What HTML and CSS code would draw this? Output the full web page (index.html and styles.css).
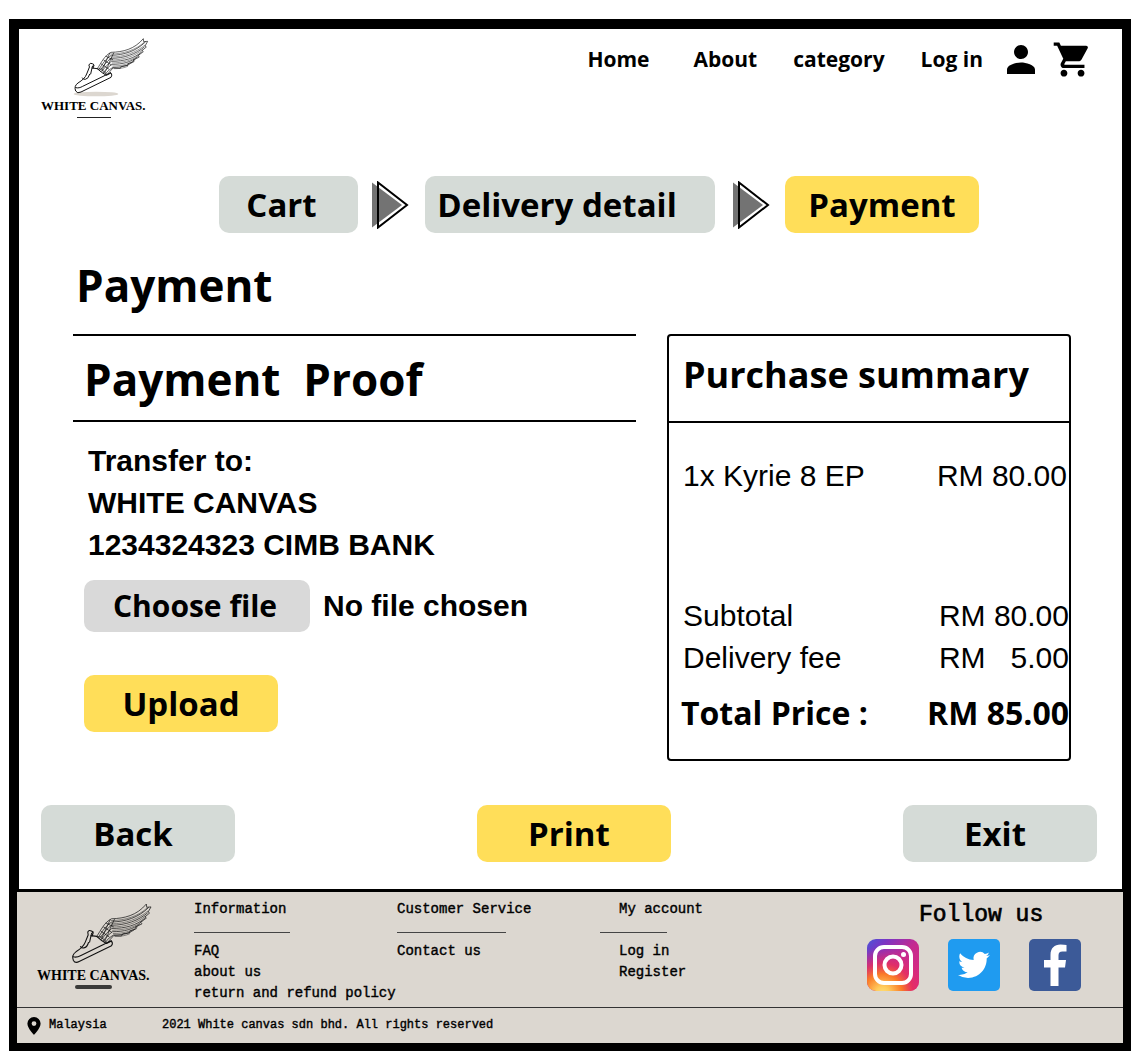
FILE: index.html
```html
<!DOCTYPE html>
<html lang="en">
<head>
<meta charset="utf-8">
<meta name="viewport" content="width=device-width, initial-scale=1">
<title>White Canvas - Payment</title>
<link rel="stylesheet" href="styles.css">
</head>
<body>
<svg class="defs" aria-hidden="true">
  <symbol id="winged-shoe" viewBox="0 0 270 192">
    <g fill="none" stroke="#111" stroke-linecap="round" stroke-linejoin="round">
      <g stroke-width="3">
        <path d="M69 92q3-7 10-3l5 3q-6 3-6 10l16 2q12 12 27 20l14-7q5 6 0 13L45 174q-11 6-16-3-6-15 7-24c14-9 22-16 26-27l8-20z"/>
        <path d="M29 161c7 2 14 0 21-4l84-41M78 102l-4 18M71 121q-4 14-13 15-7 1-9-4M84 94l-3 9"/>
      </g>
      <g stroke-width="2">
        <path d="M94 104c12-18 21-39 41-49 36-1 70-9 97-41l1 9 12-1-8 14 4 3-13 11 4 3-16 12 4 4-18 9 2 5-18 6v5l-20 3-3 6-22-1-18 20-16-16z"/>
        <path d="M99 106c10-16 22-34 37-42 38-1 74-12 102-40M103 108c9-12 20-27 32-35 40 0 75-13 100-34M108 112c8-12 18-22 28-30 38 0 69-9 91-28M112 116c8-10 16-18 26-25 32 0 58-7 76-22M118 120c6-8 13-14 23-20 26 0 43-4 58-15M131 58l-24 53M143 57l-10 21-8 20-9 19M120 67l20 10M113 78l22 14M106 90l22 15"/>
      </g>
      <path stroke-width="1.3" d="M134 60c38 0 76-12 100-35M135 69c40 0 75-14 101-35M136 78c38 0 70-12 93-30M138 87c34-1 63-8 82-25M140 96c28 0 50-6 67-18M145 104c18 0 29-2 40-7"/>
    </g>
  </symbol>
  <symbol id="step-arrow" viewBox="0 0 37 48">
    <path d="M0 1.500v45L6 42l24-18L6 6z" fill="#737373"/>
    <path d="M6 1.500v45L35 24z" fill="none" stroke="#000" stroke-width="2"/>
  </symbol>
</svg>
<div class="page">
  <header class="header">
    <a class="logo" href="#">
      <svg class="logo-art" viewBox="0 0 270 192" aria-hidden="true"><ellipse cx="90" cy="180" rx="67" ry="7" fill="#dcd7d0"/><use href="#winged-shoe" width="270" height="192"/></svg>
      <span>WHITE CANVAS.</span>
      <i class="logo-line"></i>
    </a>
    <nav class="nav" aria-label="Main">
      <a class="nav-home" href="#">Home</a>
      <a href="#">About</a>
      <a href="#">category</a>
      <a href="#">Log in</a>
      <div class="nav-icons">
        <a href="#" aria-label="Profile"><svg width="42" height="42" viewBox="0 0 24 24"><path d="M12 12c2.200 0 4-1.800 4-4s-1.800-4-4-4-4 1.800-4 4 1.800 4 4 4zm0 2c-2.700 0-8 1.300-8 4v2.500h16V18c0-2.700-5.300-4-8-4z"/></svg></a>
        <a href="#" aria-label="Shopping cart"><svg width="41" height="41" viewBox="0 0 24 24"><path d="M7 18c-1.100 0-1.990.9-1.990 2S5.900 22 7 22s2-.9 2-2-.9-2-2-2zM1 2v2h2l3.600 7.590-1.350 2.450c-.16.280-.25.610-.25.960 0 1.100.9 2 2 2h12v-2H7.420c-.14 0-.25-.11-.25-.25l.03-.12.900-1.630h7.450c.75 0 1.410-.41 1.750-1.030l3.580-6.490c.08-.14.12-.31.12-.48 0-.55-.45-1-1-1H5.210l-.94-2H1zm16 16c-1.100 0-1.990.9-1.990 2s.89 2 1.990 2 2-.9 2-2-.9-2-2-2z"/></svg></a>
      </div>
    </nav>
  </header>

  <main class="main">
    <nav class="steps" aria-label="Checkout steps">
      <button class="btn step-cart" type="button">Cart</button>
      <svg class="arrow" aria-hidden="true"><use href="#step-arrow"/></svg>
      <button class="btn step-delivery" type="button">Delivery detail</button>
      <svg class="arrow" aria-hidden="true"><use href="#step-arrow"/></svg>
      <button class="btn primary" type="button" aria-current="step">Payment</button>
    </nav>

    <h1 class="title">Payment</h1>

    <div class="columns">
      <section class="proof">
        <h2 class="proof-title">Payment  Proof</h2>
        <form class="proof-body">
          <p class="transfer">Transfer to:<br>WHITE CANVAS<br>1234324323 CIMB BANK</p>
          <div class="file-row">
            <input class="file-input" type="file" id="proof">
            <label class="file-button" for="proof">Choose file</label>
            <span>No file chosen</span>
          </div>
          <button class="btn primary" type="button">Upload</button>
        </form>
      </section>

      <section class="summary">
        <h2 class="summary-title">Purchase summary</h2>
        <table class="summary-table">
          <tbody>
            <tr class="item"><th scope="row">1x Kyrie 8 EP</th><td>RM 80.00</td></tr>
            <tr><th scope="row">Subtotal</th><td>RM 80.00</td></tr>
            <tr><th scope="row">Delivery fee</th><td>RM   5.00</td></tr>
          </tbody>
          <tfoot>
            <tr class="total"><th scope="row">Total Price :</th><td>RM 85.00</td></tr>
          </tfoot>
        </table>
      </section>
    </div>

    <div class="actions">
      <button class="btn" type="button">Back</button>
      <button class="btn primary print" type="button">Print</button>
      <button class="btn exit" type="button">Exit</button>
    </div>
  </main>

  <footer class="footer">
    <div class="footer-top">
      <a class="logo logo-footer" href="#">
        <svg class="logo-art" viewBox="0 0 270 192" aria-hidden="true"><use href="#winged-shoe" width="270" height="192"/></svg>
        <span>WHITE CANVAS.</span>
        <i class="logo-line"></i>
      </a>
      <section class="links">
        <h3>Information</h3>
        <hr class="rule rule-info">
        <a href="#">FAQ</a>
        <a href="#">about us</a>
        <a href="#">return and refund policy</a>
      </section>
      <section class="links">
        <h3>Customer Service</h3>
        <hr class="rule rule-service">
        <a href="#">Contact us</a>
      </section>
      <section class="links links-account">
        <h3>My account</h3>
        <hr class="rule rule-account">
        <a href="#">Log in</a>
        <a href="#">Register</a>
      </section>
      <section class="follow">
        <h3>Follow us</h3>
        <div class="social">
          <a href="#" aria-label="Instagram"><svg viewBox="0 0 52 52">
            <defs>
              <linearGradient id="ig-base" x1="0" y1="0" x2="1" y2="1"><stop offset="0" stop-color="#4a55d8"/><stop offset=".2" stop-color="#7a35c4"/><stop offset=".5" stop-color="#c42a90"/><stop offset="1" stop-color="#e02a78"/></linearGradient>
              <radialGradient id="ig-warm" cx=".3" cy="1.050" r=".9"><stop offset="0" stop-color="#ffdf78"/><stop offset=".15" stop-color="#ffcb5c"/><stop offset=".42" stop-color="#fa7a28"/><stop offset=".65" stop-color="#e8305c" stop-opacity=".8"/><stop offset="1" stop-color="#d42a86" stop-opacity="0"/></radialGradient>
            </defs>
            <rect width="52" height="52" rx="9" fill="url(#ig-base)"/><rect width="52" height="52" rx="9" fill="url(#ig-warm)"/>
            <g fill="none" stroke="#fff" stroke-width="4"><rect x="8" y="8" width="36" height="36" rx="9"/><circle cx="26" cy="26" r="8.500"/></g><circle cx="36.500" cy="15.500" r="2.500" fill="#fff"/></svg></a>
          <a href="#" aria-label="Twitter"><svg viewBox="0 0 52 52"><rect width="52" height="52" rx="5" fill="#1f9bf0"/><path fill="#fff" transform="translate(10 10) scale(1.330)" d="M23.953 4.570a10 10 0 01-2.825.775 4.958 4.958 0 002.163-2.723c-.951.555-2.005.959-3.127 1.184a4.920 4.920 0 00-8.384 4.482C7.690 8.095 4.067 6.130 1.640 3.162a4.822 4.822 0 00-.666 2.475c0 1.710.87 3.213 2.188 4.096a4.904 4.904 0 01-2.228-.616v.06a4.923 4.923 0 003.946 4.827 4.996 4.996 0 01-2.212.085 4.936 4.936 0 004.604 3.417 9.867 9.867 0 01-6.102 2.105c-.39 0-.779-.023-1.170-.067a13.995 13.995 0 007.557 2.209c9.053 0 13.998-7.496 13.998-13.985 0-.21 0-.42-.015-.63A9.935 9.935 0 0024 4.590z"/></svg></a>
          <a href="#" aria-label="Facebook"><svg viewBox="0 0 52 52"><rect width="52" height="52" rx="5" fill="#3c5a98"/><path fill="#fff" d="M21.500 47V28.500H15V21h6.500v-5C21.500 9 25.500 5.500 31.500 5.500q4 0 6 .5v6.500h-4c-3 0-4 1.500-4 4V21h7.500l-1 7.500h-6.500V47z"/></svg></a>
        </div>
      </section>
    </div>
    <div class="footer-bottom">
      <svg class="pin" viewBox="0 0 14 18" aria-hidden="true"><path fill-rule="evenodd" d="M7 0a6.600 6.600 0 0 0-6.600 6.600C.4 11.500 7 18 7 18s6.600-6.500 6.600-11.400A6.600 6.600 0 0 0 7 0zm0 4.200a2.400 2.400 0 1 1 0 4.800 2.400 2.400 0 0 1 0-4.800z"/></svg>
      <span class="country">Malaysia</span>
      <span>2021 White canvas sdn bhd. All rights reserved</span>
    </div>
  </footer>
</div>
</body>
</html>
```
FILE: styles.css
```css
* { box-sizing: border-box; }

body {
  margin: 0;
  padding: 19px 0 12px 9px;
  background: #fff;
  color: #000;
  font-family: "Open Sans", "Noto Sans", sans-serif;
  font-weight: 700;
}

h1, h2, h3, p { margin: 0; }
a { color: inherit; text-decoration: none; }
svg { display: block; }
.defs { position: absolute; width: 0; height: 0; }

.page {
  border: 10px solid #000;
  border-right-width: 9px;
  border-bottom-width: 8px;
}

/* Header */
.header {
  display: flex;
  justify-content: space-between;
  align-items: flex-start;
  padding: 5px 29px 0 22px;
}

.logo {
  display: flex;
  flex-direction: column;
  align-items: flex-start;
  font: 700 13px/16px "Liberation Serif", serif;
  white-space: nowrap;
}
.logo-art { width: 90px; height: 64px; margin-left: 25px; }
.logo-line { width: 34px; height: 1px; margin: 3px 0 0 36px; background: #222; }

.nav {
  display: flex;
  align-items: center;
  gap: 36px;
  margin-top: 2px;
  font-size: 21px;
  line-height: 28px;
  height: 46px;
}
.nav-home { margin-right: 8px; }
.nav-icons { display: flex; align-items: center; gap: 10px; margin-left: -19px; }

/* Buttons */
.btn {
  width: 194px;
  height: 57px;
  padding: 0;
  border: 0;
  border-radius: 10px;
  background: #d5dbd7;
  color: #000;
  font: 700 33px/44px "Open Sans", "Noto Sans", sans-serif;
}
.primary { background: #ffde59; }

/* Checkout steps */
.steps {
  display: flex;
  align-items: center;
  margin: 58px 0 22px 200px;
}
.step-cart { width: 139px; padding-right: 14px; }
.step-delivery { width: 290px; padding-right: 26px; }
.arrow { width: 37px; height: 48px; margin: 0 16px 0 14px; }
.step-delivery + .arrow { margin-left: 18px; margin-right: 15px; }

/* Payment */
.title {
  padding-left: 57px;
  font-size: 44px;
  line-height: 60px;
}
.columns {
  display: grid;
  grid-template-columns: 563fr 404fr;
  gap: 31px;
  margin: 19px 51px 0 54px;
}
.proof { border-top: 2px solid #000; }
.proof-title {
  padding: 13px 9px 11px 11px;
  border-bottom: 2px solid #000;
  font-size: 44px;
  line-height: 60px;
  white-space: pre-wrap;
}
.proof-body { padding: 18px 0 0 11px; }
.transfer {
  padding-left: 4px;
  font: 700 30px/42px "Liberation Sans", Arial, sans-serif;
}
.file-row {
  display: flex;
  align-items: center;
  gap: 13px;
  margin: 14px 0 43px;
  font: 700 30px/42px "Liberation Sans", Arial, sans-serif;
}
.file-input { position: absolute; width: 1px; height: 1px; opacity: 0; }
.file-button {
  width: 226px;
  padding: 5px 4px 5px 0;
  border-radius: 10px;
  background: #d9d9d9;
  font-family: "Open Sans", "Noto Sans", sans-serif;
  text-align: center;
}

.summary {
  border: 2px solid #000;
  border-radius: 4px;
  padding-bottom: 24px;
}
.summary-title {
  padding: 14px 14px 21px;
  border-bottom: 2px solid #000;
  font-size: 36px;
  line-height: 50px;
}
.summary-table {
  width: 100%;
  margin-top: 32px;
  border-collapse: collapse;
  font: 400 30px/42px "Liberation Sans", Arial, sans-serif;
}
.summary-table th { padding: 0 0 0 14px; font-weight: inherit; text-align: left; }
.summary-table td { padding: 0; text-align: right; white-space: pre; }
.summary-table .item > * { padding-bottom: 98px; }
.summary-table .item td { padding-right: 2px; }
.summary-table .total > * {
  padding-top: 12px;
  font: 700 32px/44px "Open Sans", "Noto Sans", sans-serif;
}
.summary-table .total th { padding-left: 12px; }

.actions {
  display: grid;
  grid-template-columns: 194px 242fr 194px 232fr 194px;
  margin: 44px 25px 27px 22px;
}
.actions .btn { padding-right: 10px; }
.print { grid-column: 3; }
.exit { grid-column: 5; }

/* Footer */
.footer {
  margin: 0 -1px 0 -2px;
  border-top: 3px solid #000;
  background: #dcd7d0;
  font: 400 14px/21px "Liberation Mono", monospace;
  -webkit-text-stroke: 0.4px #000;
}
.footer-top {
  display: grid;
  grid-template-columns: 177fr 203fr 203fr 267fr 256fr;
  padding-top: 7px;
  height: 115px;
}
.footer-top > * { min-width: 0; }
.footer h3 { font: inherit; }
.logo-footer {
  padding-left: 20px;
  font-size: 14px;
  -webkit-text-stroke: 0;
}
.logo-footer .logo-art { width: 97px; height: 69px; margin-left: 26px; }
.logo-footer .logo-line { height: 4px; width: 37px; border-radius: 2px; margin: 1px 0 0 38px; background: #3a3a38; }
.links a { display: block; white-space: nowrap; }
.rule { height: 1px; margin: 12px 0 8px; border: 0; background: #444; }
.rule-info { width: 96px; }
.rule-service { width: 109px; }
.links-account { padding-left: 19px; }
.rule-account { width: 67px; margin-left: -19px; }
.follow h3 {
  padding: 3px 0 10px 52px;
  font-size: 23px;
  line-height: 27px;
  -webkit-text-stroke: 0.7px #000;
}
.social { display: flex; gap: 29px; }
.social svg { width: 52px; height: 52px; }
.footer-bottom {
  display: flex;
  align-items: center;
  height: 36px;
  padding-left: 10px;
  border-top: 1px solid #333;
  font-size: 12px;
}
.pin { width: 14px; height: 18px; margin-right: 8px; }
.country { width: 113px; }
```
